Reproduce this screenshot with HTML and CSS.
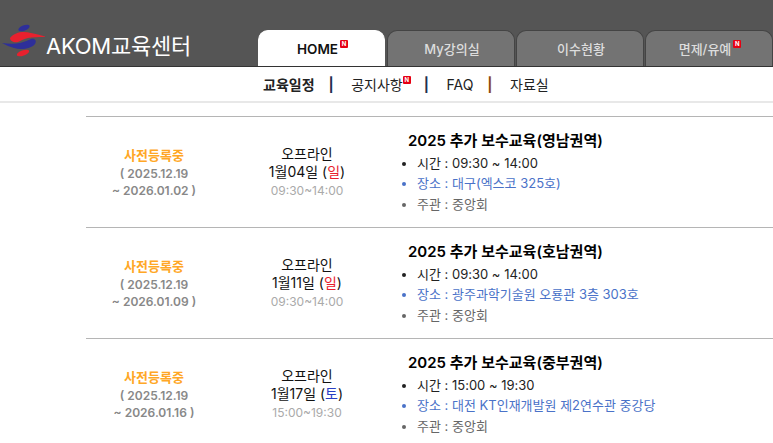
FILE: index.html
```html
<!DOCTYPE html>
<html lang="ko">

<head>
    <meta charset="UTF-8">
    <meta name="viewport" content="width=device-width, initial-scale=1.0">
    <title>AKOM교육센터</title>
    <link rel="stylesheet" href="styles.css">
</head>

<body>
    <header class="top-bar">
        <a class="logo">
            <svg class="logo-mark" width="44" height="36" viewBox="0 0 44 36">
                <ellipse cx="23" cy="5" rx="6" ry="2.7" transform="rotate(-22 23 5)" fill="#2e2f9a"/>
                <path d="M9 15C14 9 22 8 30 10C35 11 40 12 45 14C38 14 32 14 27 15C22 16 20 18 17 19C13 20 9 18 9 15Z" fill="#e8212e"/>
                <path d="M1 20C8 21 14 21 19 20C24 19 27 17 30 16C34 15 36 18 34 21C30 26 20 27 13 25C9 24 5 22 1 20Z" fill="#2e2f9a"/>
                <ellipse cx="22" cy="30" rx="6.5" ry="2.7" transform="rotate(-20 22 30)" fill="#e8212e"/>
            </svg>
            <span class="logo-text">AKOM교육센터</span>
        </a>
        <nav class="tabs">
            <a class="tab active">HOME<span class="new-badge">N</span></a>
            <a class="tab">My강의실</a>
            <a class="tab">이수현황</a>
            <a class="tab">면제/유예<span class="new-badge">N</span></a>
        </nav>
    </header>

    <nav class="sub-nav">
        <a class="sub-link current">교육일정</a>
        <span class="sep">|</span>
        <a class="sub-link">공지사항<span class="new-badge">N</span></a>
        <span class="sep">|</span>
        <a class="sub-link">FAQ</a>
        <span class="sep sep-brown">|</span>
        <a class="sub-link">자료실</a>
    </nav>

    <main class="schedule">
        <div class="course-row">
            <div class="status-col">
                <div class="status">사전등록중</div>
                <div class="period">( 2025.12.19<br>~ 2026.01.02 )</div>
            </div>
            <div class="date-col">
                <div>오프라인</div>
                <div>1월04일 (<span class="sun">일</span>)</div>
                <div class="time">09:30~14:00</div>
            </div>
            <div class="info-col">
                <h3>2025 추가 보수교육(영남권역)</h3>
                <ul>
                    <li>시간 : 09:30 ~ 14:00</li>
                    <li class="place">장소 : 대구(엑스코 325호)</li>
                    <li class="host">주관 : 중앙회</li>
                </ul>
            </div>
        </div>

        <div class="course-row">
            <div class="status-col">
                <div class="status">사전등록중</div>
                <div class="period">( 2025.12.19<br>~ 2026.01.09 )</div>
            </div>
            <div class="date-col">
                <div>오프라인</div>
                <div>1월11일 (<span class="sun">일</span>)</div>
                <div class="time">09:30~14:00</div>
            </div>
            <div class="info-col">
                <h3>2025 추가 보수교육(호남권역)</h3>
                <ul>
                    <li>시간 : 09:30 ~ 14:00</li>
                    <li class="place">장소 : 광주과학기술원 오룡관 3층 303호</li>
                    <li class="host">주관 : 중앙회</li>
                </ul>
            </div>
        </div>

        <div class="course-row">
            <div class="status-col">
                <div class="status">사전등록중</div>
                <div class="period">( 2025.12.19<br>~ 2026.01.16 )</div>
            </div>
            <div class="date-col">
                <div>오프라인</div>
                <div>1월17일 (<span class="sat">토</span>)</div>
                <div class="time">15:00~19:30</div>
            </div>
            <div class="info-col">
                <h3>2025 추가 보수교육(중부권역)</h3>
                <ul>
                    <li>시간 : 15:00 ~ 19:30</li>
                    <li class="place">장소 : 대전 KT인재개발원 제2연수관 중강당</li>
                    <li class="host">주관 : 중앙회</li>
                </ul>
            </div>
        </div>
    </main>
</body>
</html>
```

FILE: styles.css
```css
* {
    margin: 0;
    padding: 0;
    box-sizing: border-box;
}

html,
body {
    height: 443px;
    overflow: hidden;
}

body {
    font-family: Inter, "Noto Sans CJK KR", sans-serif;
    background-color: #fff;
    color: #111;
}

.top-bar {
    display: flex;
    justify-content: space-between;
    align-items: flex-end;
    height: 67px;
    background-color: #555;
    border-bottom: 1px solid #333;
}

.logo {
    display: flex;
    align-items: flex-end;
    padding-left: 1px;
    padding-bottom: 7px;
}

.logo-mark {
    margin-right: 1px;
}

.logo-text {
    color: #fff;
    font-size: 22px;
    line-height: 26px;
    letter-spacing: -0.25px;
}

.tabs {
    display: flex;
    gap: 1px;
}

.tab {
    display: flex;
    justify-content: center;
    padding-top: 9px;
    padding-left: 2px;
    width: 128px;
    height: 36px;
    font-size: 13px;
    line-height: 18px;
    font-weight: 500;
    color: #ddd;
    background-color: #737373;
    border: 1px solid #444;
    border-bottom: 0;
    border-radius: 10px 10px 0 0;
}

.tab.active {
    width: 127px;
    margin-right: 1px;
    font-size: 13.5px;
    color: #111;
    font-weight: 600;
    background-color: #fff;
    border-color: #fff;
}

.new-badge {
    display: inline-block;
    width: 8px;
    height: 8px;
    margin-left: 2px;
    font-size: 6px;
    line-height: 8px;
    font-weight: 700;
    text-align: center;
    color: #fff;
    background-color: #e60012;
    border-radius: 1px;
    align-self: flex-start;
}

.sub-nav {
    display: flex;
    align-items: center;
    height: 36px;
    padding-left: 263px;
    border-bottom: 2px solid #e8e8e8;
    font-size: 14px;
}

.sub-link {
    display: flex;
    color: #222;
}

.sub-link.current {
    font-weight: 700;
}

.sub-link .new-badge {
    margin-left: 0;
    margin-top: 2px;
    margin-right: -1px;
}

.sep {
    margin: 0 17.5px 0 14px;
    font-weight: 700;
    color: #1f3050;
}

.sep-brown {
    color: #8a4b12;
}

.schedule {
    margin-top: 13px;
    margin-left: 86px;
}

.course-row {
    display: flex;
    align-items: center;
    height: 111px;
    border-top: 1px solid #b5b5b5;
}

.status-col {
    width: 136px;
    padding-top: 1px;
    text-align: center;
    font-size: 12px;
    line-height: 17px;
    font-weight: 600;
    color: #888;
}

.status {
    color: #ffa726;
    font-size: 13px;
    line-height: 19px;
}

.date-col {
    width: 170px;
    text-align: center;
    font-size: 14px;
    line-height: 18px;
    color: #111;
}

.time {
    font-size: 12px;
    line-height: 19px;
    color: #aaa;
}

.sun {
    color: #e8202e;
}

.sat {
    color: #2a3fc4;
}

.info-col {
    margin-left: 16px;
}

.info-col h3 {
    font-size: 15px;
    line-height: 21px;
    font-weight: 600;
    color: #000;
    margin-bottom: 2px;
}

.info-col ul {
    padding-left: 9px;
    list-style-type: disc;
}

.info-col li {
    font-size: 13px;
    line-height: 20.5px;
    color: #222;
}

.info-col .place {
    color: #4a72c8;
}

.info-col .host {
    color: #666;
}
```
